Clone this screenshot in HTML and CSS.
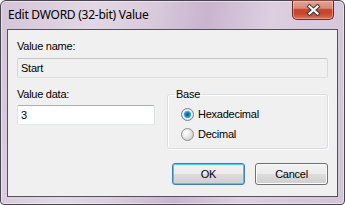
FILE: index.html
```html
<!DOCTYPE html>
<html>
<head>
<meta charset="utf-8">
<link rel="stylesheet" href="styles.css">
</head>
<body>
<div class="window">
  <div class="titlebar">
    <span class="title">Edit DWORD (32-bit) Value</span>
    <button class="close" aria-label="Close">
      <svg width="15" height="12" viewBox="0 0 15 12">
        <path d="M3.5 2.5 L11.5 9.5 M11.5 2.5 L3.5 9.5" stroke="#3c3c3c" stroke-width="4.2" stroke-linecap="square" fill="none"/>
        <path d="M3.5 2.5 L11.5 9.5 M11.5 2.5 L3.5 9.5" stroke="#ffffff" stroke-width="2.2" stroke-linecap="square" fill="none"/>
      </svg>
    </button>
  </div>
  <div class="client">
    <div class="lbl">Value name:</div>
    <div class="field readonly">Start</div>
    <div class="row">
      <div class="col">
        <div class="lbl lbl-data">Value data:</div>
        <div class="field edit">3</div>
      </div>
      <fieldset class="group">
        <legend>Base</legend>
        <div class="radio"><span class="dot checked"></span>Hexadecimal</div>
        <div class="radio"><span class="dot"></span>Decimal</div>
      </fieldset>
    </div>
    <div class="buttons">
      <button class="btn default">OK</button>
      <button class="btn">Cancel</button>
    </div>
  </div>
</div>
</body>
</html>
```
FILE: styles.css
```css
html, body {
  margin: 0;
  padding: 0;
  background: #ffffff;
}
body {
  width: 345px;
  height: 205px;
  overflow: hidden;
  font-family: "Liberation Sans", Arial, sans-serif;
  font-size: 11px;
  color: #000;
}
.window {
  box-sizing: border-box;
  width: 345px;
  height: 205px;
  border: 1px solid #4a4452;
  border-radius: 6px 6px 4px 4px;
  background: linear-gradient(100deg, #d4c5d8 0%, #e2d8e5 25%, #d9cbdc 40%, #c9b5ce 55%, #dccfe0 72%, #d3c3d7 100%);
  box-shadow: inset 0 0 0 1px rgba(255,255,255,0.45);
  display: flex;
  flex-direction: column;
}
.titlebar {
  height: 28px;
  display: flex;
  align-items: flex-start;
  padding: 0 10px 0 7px;
}
.title {
  font-family: "Noto Sans", "Open Sans", sans-serif;
  font-size: 12px;
  letter-spacing: -0.25px;
  line-height: 28px;
  color: #000;
  white-space: nowrap;
}
.close {
  margin: -1px 0 0 auto;
  width: 42px;
  height: 20px;
  padding: 0;
  border: 1px solid #6b2a22;
  border-top-color: #8a4a40;
  border-radius: 0 0 5px 5px;
  background: linear-gradient(#e3a294 0%, #d88a78 40%, #c7442f 48%, #c8472f 70%, #d9735b 100%);
  box-shadow: inset 0 0 0 1px rgba(255,210,200,0.45);
  display: flex;
  align-items: center;
  justify-content: center;
}
.close svg { display: block; }
.client {
  margin: 0 6px 7px 6px;
  height: 168px;
  box-sizing: border-box;
  border: 1px solid #555059;
  background: #f0f0f0;
  padding: 10px 9px 11px 9px;
  display: flex;
  flex-direction: column;
  letter-spacing: -0.25px;
}
.lbl {
  line-height: 13px;
  height: 13px;
  margin-bottom: 5px;
  white-space: nowrap;
}
.lbl-data { margin-bottom: 4px; }
.field {
  box-sizing: border-box;
  height: 20px;
  line-height: 18px;
  padding: 0 3px;
  border: 1px solid;
  border-radius: 2px;
}
.readonly {
  width: 311px;
  background: #f0f0f0;
  border-color: #c6c6c6 #d9d9d9 #dedede #d9d9d9;
}
.edit {
  width: 138px;
  background: #ffffff;
  border-color: #abadb3 #dbdfe6 #e3e9ef #e2e3ea;
}
.row {
  margin-top: 10px;
  display: flex;
  align-items: flex-start;
}
.col {
  display: flex;
  flex-direction: column;
}
.group {
  margin: 0 0 0 auto;
  box-sizing: border-box;
  width: 161px;
  height: 61px;
  padding: 3px 6px 0 6px;
  border: 1px solid #d5dfe5;
  border-radius: 3px;
  box-shadow: inset 1px 1px 0 #ffffff, 1px 1px 0 #ffffff;
}
.group legend {
  padding: 0 2px;
  line-height: 13px;
}
.radio {
  height: 20px;
  display: flex;
  align-items: center;
  margin-left: 7px;
  white-space: nowrap;
}
.dot {
  box-sizing: border-box;
  width: 13px;
  height: 13px;
  border-radius: 50%;
  border: 1px solid #8e8f8f;
  background: radial-gradient(circle 8px at 35% 35%, #ffffff 0px, #f2f2f2 3px, #cfcfcf 8px);
  margin-right: 4px;
  flex: none;
}
.dot.checked {
  background: radial-gradient(circle 6px at 50% 50%, #0b5a90 0px, #1b78b4 1.8px, #4fb3e6 3.4px, #e8e8e8 3.9px, #f4f4f4 4.5px, #d2d2d2 6px);
  border-color: #6d8598;
}
.buttons {
  margin-top: auto;
  display: flex;
  justify-content: flex-end;
  gap: 10px;
}
.btn {
  box-sizing: border-box;
  width: 73px;
  height: 22px;
  padding: 0;
  font-family: "Liberation Sans", Arial, sans-serif;
  font-size: 11px;
  letter-spacing: -0.25px;
  color: #000;
  border: 1px solid #707070;
  border-radius: 3px;
  background: linear-gradient(#f2f2f2 0%, #ebebeb 50%, #dddddd 50%, #cfcfcf 100%);
  box-shadow: inset 0 0 0 1px #fcfcfc;
}
.btn.default {
  border-color: #3c7fb1;
  box-shadow: inset 0 0 0 1px #48c8f4;
}
```
